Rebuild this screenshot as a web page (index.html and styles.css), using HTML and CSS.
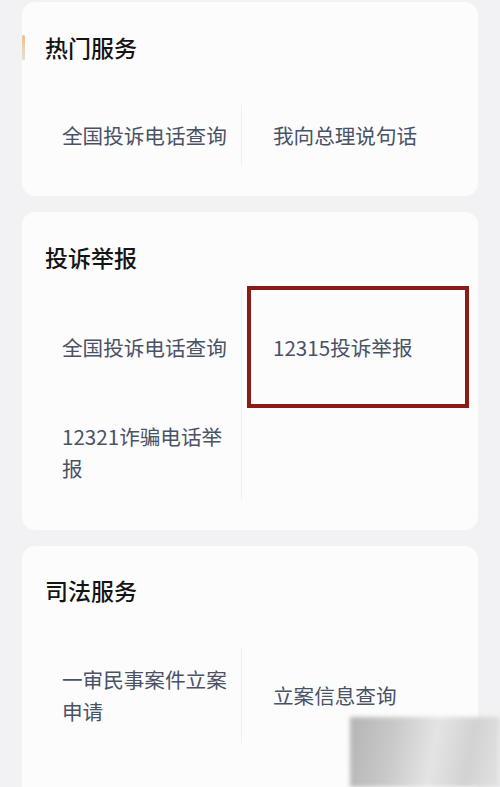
FILE: index.html
```html
<!DOCTYPE html>
<html lang="zh-CN">
<head>
<meta charset="utf-8">
<title>服务</title>
<link rel="stylesheet" href="styles.css">
</head>
<body>
<div class="page">
  <section class="card card-hot">
    <h2 class="card-title has-bar">热门服务</h2>
    <div class="grid">
      <div class="cell left row-h60">全国投诉电话查询</div>
      <div class="cell right row-h60">我向总理说句话</div>
    </div>
  </section>

  <section class="card card-report">
    <h2 class="card-title">投诉举报</h2>
    <div class="grid">
      <div class="cell left row-h114">全国投诉电话查询</div>
      <div class="cell right row-h114">12315投诉举报<span class="highlight"></span></div>
      <div class="cell left row-h96">12321诈骗电话举报</div>
      <div class="cell right row-h96"></div>
    </div>
  </section>

  <section class="card card-law">
    <h2 class="card-title">司法服务</h2>
    <div class="grid">
      <div class="cell left row-h96">一审民事案件立案申请</div>
      <div class="cell right row-h96">立案信息查询</div>
    </div>
  </section>
</div>
<div class="watermark"></div>
</body>
</html>
```

FILE: styles.css
```css
* { box-sizing: border-box; }
html, body { margin: 0; padding: 0; }
body {
  width: 500px;
  height: 787px;
  overflow: hidden;
  background: #f2f2f4;
  font-family: "Noto Sans CJK SC", "Noto Sans", sans-serif;
  position: relative;
}
.page {
  padding: 2px 22px 0;
  display: flex;
  flex-direction: column;
  gap: 16px;
}
.card {
  background: #fcfcfd;
  border-radius: 13px;
}
.card-hot { height: 194px; padding-top: 30px; }
.card-report { height: 318px; padding-top: 30px; }
.card-law { height: 260px; padding-top: 29px; }
.card-title {
  margin: 0;
  padding-left: 23px;
  font-size: 23px;
  line-height: 30px;
  font-weight: 500;
  color: #141414;
  position: relative;
}
.has-bar::before {
  content: "";
  position: absolute;
  left: 0;
  top: 3px;
  width: 3px;
  height: 25px;
  background: linear-gradient(#f3b98c, #e8d9b5 60%, #d7e6c9);
  border-radius: 2px;
}
.grid {
  display: grid;
  grid-template-columns: 220px 1fr;
}
.card-hot .grid { margin-top: 43px; }
.card-report .grid { margin-top: 18px; }
.card-law .grid { margin-top: 42px; }
.cell {
  display: flex;
  align-items: center;
  font-size: 20.6px;
  line-height: 32px;
  color: #4a5266;
  position: relative;
}
.cell.left {
  padding: 0 10px 0 40px;
  border-right: 1px solid #efeff2;
}
.cell.right { padding-left: 31px; }
.row-h60 { height: 60px; }
.row-h114 { height: 114px; }
.row-h96 { height: 96px; }
.highlight {
  position: absolute;
  left: 5px;
  top: -4px;
  width: 222px;
  height: 122px;
  border: 4px solid #8a1c15;
}
.watermark {
  position: absolute;
  left: 350px;
  top: 717px;
  width: 150px;
  height: 70px;
  background: linear-gradient(100deg, #b4b4b4 0%, #cacaca 30%, #e4e4e4 55%, #d2d2d2 78%, #e2e2e2 100%);
  filter: blur(2px);
}
```
